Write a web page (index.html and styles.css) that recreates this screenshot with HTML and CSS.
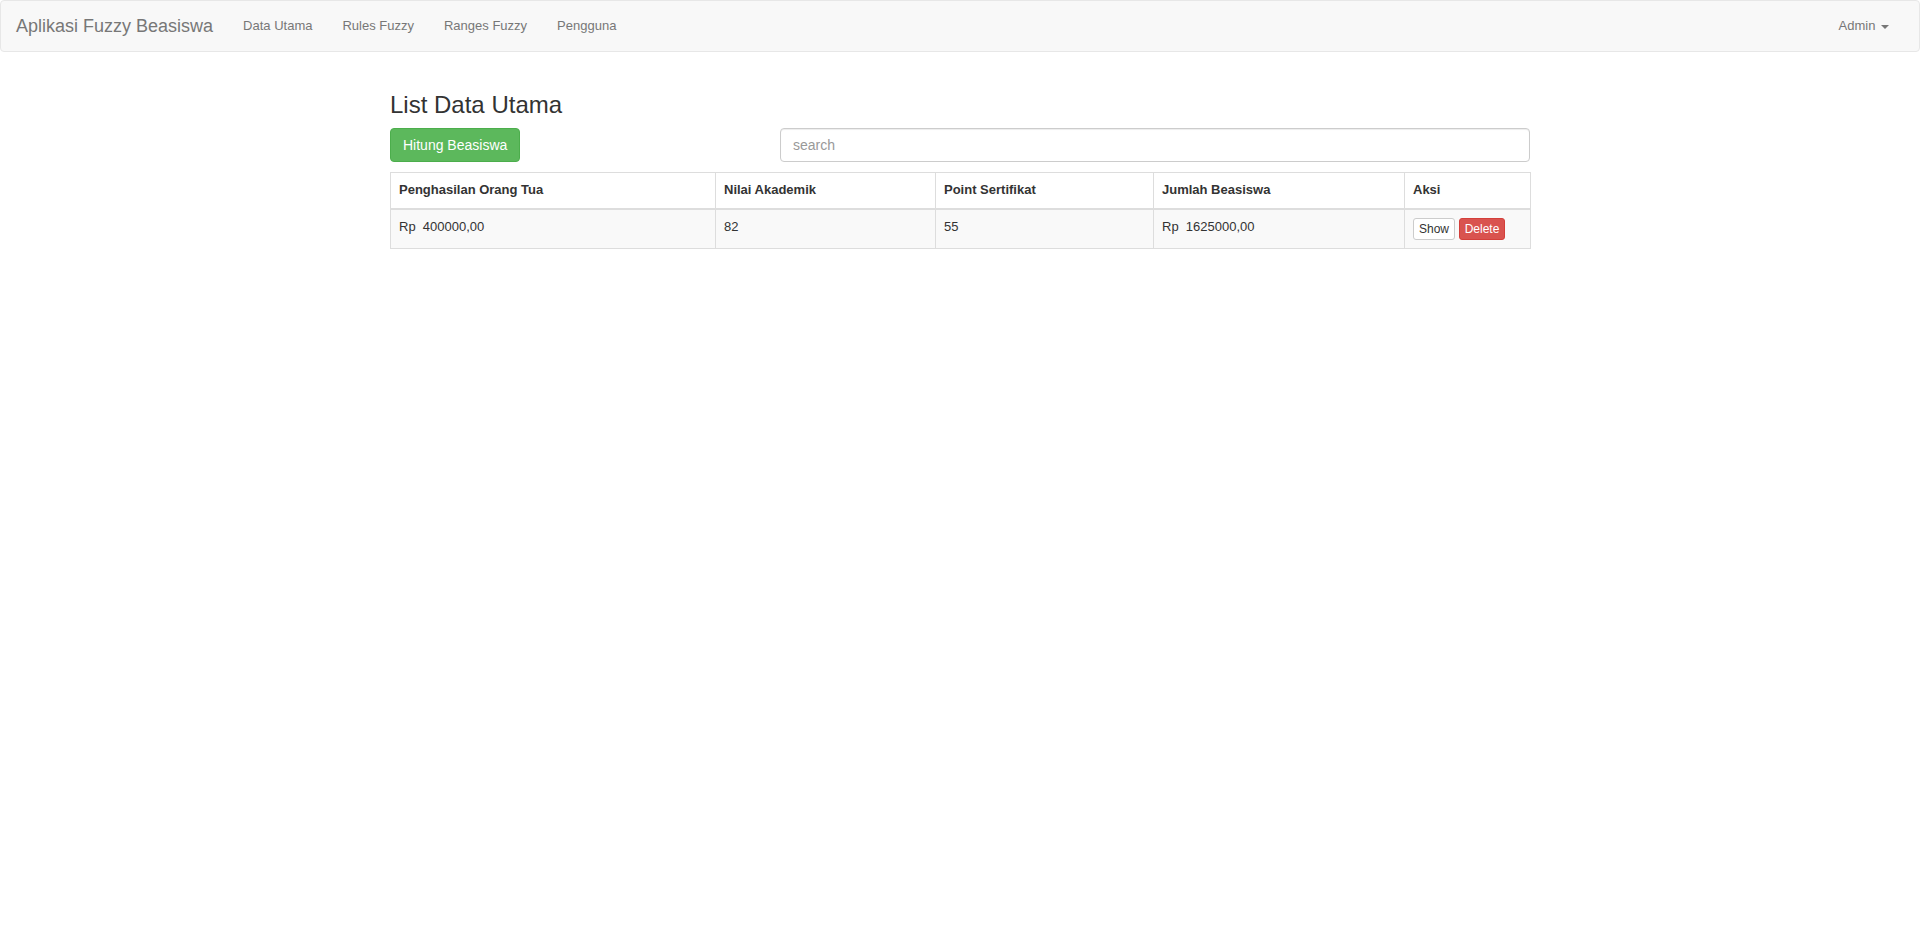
FILE: index.html
```html
<!DOCTYPE html>
<html lang="id">
<head>
<meta charset="utf-8">
<title>Aplikasi Fuzzy Beasiswa</title>
<link rel="stylesheet" href="styles.css">
</head>
<body>
<nav class="navbar">
  <div class="navbar-left">
    <a class="brand" href="#">Aplikasi Fuzzy Beasiswa</a>
    <ul class="nav">
      <li><a href="#">Data Utama</a></li>
      <li><a href="#">Rules Fuzzy</a></li>
      <li><a href="#">Ranges Fuzzy</a></li>
      <li><a href="#">Pengguna</a></li>
    </ul>
  </div>
  <ul class="nav nav-right">
    <li><a href="#">Admin <span class="caret"></span></a></li>
  </ul>
</nav>

<main class="container">
  <h3 class="title">List Data Utama</h3>
  <div class="toolbar">
    <div><button class="btn btn-success">Hitung Beasiswa</button></div>
    <div><input class="form-control" type="text" placeholder="search"></div>
  </div>
  <table class="table">
    <colgroup>
      <col class="c1"><col class="c2"><col class="c3"><col class="c4"><col class="c5">
    </colgroup>
    <thead>
      <tr>
        <th>Penghasilan Orang Tua</th>
        <th>Nilai Akademik</th>
        <th>Point Sertifikat</th>
        <th>Jumlah Beasiswa</th>
        <th>Aksi</th>
      </tr>
    </thead>
    <tbody>
      <tr>
        <td>Rp&nbsp; 400000,00</td>
        <td>82</td>
        <td>55</td>
        <td>Rp&nbsp; 1625000,00</td>
        <td><button class="btn-xs btn-default">Show</button> <button class="btn-xs btn-danger">Delete</button></td>
      </tr>
    </tbody>
  </table>
</main>
</body>
</html>
```

FILE: styles.css
```css
* { box-sizing: border-box; }
html, body {
  margin: 0;
  padding: 0;
  background: #fff;
}
body {
  font-family: "Liberation Sans", Arial, Helvetica, sans-serif;
  font-size: 13px;
  line-height: 1.42857;
  color: #333;
}
a { text-decoration: none; }

.navbar {
  display: flex;
  justify-content: space-between;
  align-items: stretch;
  min-height: 52px;
  margin-bottom: 20px;
  background: #f8f8f8;
  border: 1px solid #e7e7e7;
  border-radius: 4px;
  padding: 0 15px 0 15px;
}
.navbar-left {
  display: flex;
  margin-left: -15px;
}
.brand {
  display: block;
  height: 50px;
  padding: 15px;
  font-size: 18px;
  line-height: 20px;
  color: #777;
}
.nav {
  display: flex;
  list-style: none;
  margin: 0;
  padding: 0;
}
.nav a {
  display: block;
  padding: 15px;
  line-height: 20px;
  color: #777;
}
.caret {
  display: inline-block;
  width: 0;
  height: 0;
  margin-left: 2px;
  vertical-align: middle;
  border-top: 4px solid #777;
  border-left: 4px solid transparent;
  border-right: 4px solid transparent;
}

.container {
  display: flow-root;
  width: 1170px;
  margin: 0 auto;
  padding: 0 15px;
}
.title {
  margin: 20px 0 10px;
  font-size: 24px;
  font-weight: 500;
  line-height: 1.1;
  color: #333;
}
.toolbar {
  display: grid;
  grid-template-columns: 360px 1fr;
  column-gap: 30px;
}
.btn {
  display: inline-block;
  height: 34px;
  padding: 6px 12px;
  font-family: inherit;
  font-size: 14px;
  line-height: 20px;
  border: 1px solid transparent;
  border-radius: 4px;
  cursor: pointer;
}
.btn-success {
  color: #fff;
  background: #5cb85c;
  border-color: #4cae4c;
}
.form-control {
  display: block;
  width: 100%;
  height: 34px;
  padding: 6px 12px;
  font-family: inherit;
  font-size: 14px;
  line-height: 20px;
  color: #555;
  background: #fff;
  border: 1px solid #ccc;
  border-radius: 4px;
  box-shadow: inset 0 1px 1px rgba(0,0,0,.075);
}
.form-control::placeholder { color: #999; }

.table {
  width: 100%;
  margin-top: 10px;
  border-collapse: collapse;
  table-layout: fixed;
  border: 1px solid #ddd;
}
.c1 { width: 325px; }
.c2 { width: 220px; }
.c3 { width: 218px; }
.c4 { width: 251px; }
.c5 { width: 126px; }
.table th, .table td {
  padding: 8px;
  border: 1px solid #ddd;
  text-align: left;
  vertical-align: top;
  line-height: 1.42857;
}
.table th {
  font-weight: bold;
  vertical-align: bottom;
  border-bottom-width: 2px;
  background: #fff;
}
.table tbody tr:nth-child(odd) { background: #f9f9f9; }

.btn-xs {
  display: inline-block;
  padding: 1px 5px;
  font-family: inherit;
  font-size: 12px;
  line-height: 1.5;
  border: 1px solid transparent;
  border-radius: 3px;
  cursor: pointer;
  vertical-align: middle;
}
.btn-default {
  color: #333;
  background: #fff;
  border-color: #ccc;
}
.btn-danger {
  color: #fff;
  background: #d9534f;
  border-color: #d43f3a;
}
```
